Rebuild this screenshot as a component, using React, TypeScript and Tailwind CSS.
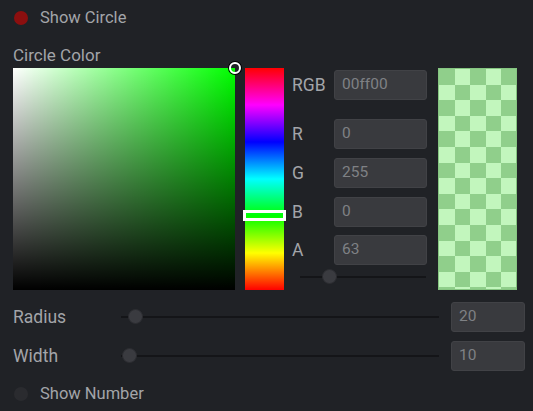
import React from "react";

const Field = ({ value, w = "w-[93px]" }: { value: string; w?: string }) => (
  <div className={`${w} h-[30px] rounded-[3px] bg-[#393a3e] border border-[#414246] flex items-center pl-[7px] text-[15.5px] text-[#7f8185]`}>
    {value}
  </div>
);

const Slider = ({ thumbX, width }: { thumbX: number; width: number }) => (
  <div className="relative h-[16px]" style={{ width }}>
    <div className="absolute left-0 right-0 top-[7px] h-[2px] bg-[#141518]" />
    <div
      className="absolute top-0 w-[15px] h-[15px] rounded-full bg-[#3a3b40] border border-[#2c2d31]"
      style={{ left: thumbX - 7 }}
    />
  </div>
);

export default function App() {
  const rows: [string, string, string][] = [
    ["RGB", "00ff00", "mb-[19px]"],
    ["R", "0", "mb-[9px]"],
    ["G", "255", "mb-[9px]"],
    ["B", "0", "mb-[8px]"],
    ["A", "63", ""],
  ];
  const cells = Array.from({ length: 15 * 5 }, (_, i) => i);
  return (
    <div
      className="w-[533px] h-[411px] bg-[#202226] text-[#a3a5a9] overflow-hidden"
      style={{ fontFamily: "Roboto, 'Liberation Sans', sans-serif" }}
    >
      <div className="h-[36px] flex items-center pl-[14px]">
        <div className="w-[14px] h-[14px] rounded-full bg-[#8c0f0f]" />
        <span className="ml-[12px] text-[16.5px]">Show Circle</span>
      </div>
      <div className="h-[32px] pl-[13px] pt-[9px] text-[17px] leading-[20px]">Circle Color</div>
      <div className="flex pl-[13px] h-[222px]">
        <div className="relative w-[222px] h-[222px] bg-[#00ff00]">
          <div className="absolute inset-0 bg-gradient-to-r from-white to-transparent" />
          <div className="absolute inset-0 bg-gradient-to-b from-transparent to-black" />
          <div className="absolute -right-[6px] -top-[6px] w-[12px] h-[12px] rounded-full border-2 border-white ring-1 ring-black" />
        </div>
        <div
          className="relative ml-[10px] w-[39px] h-[222px]"
          style={{
            background:
              "linear-gradient(to bottom, #ff0000, #ff00ff 16.66%, #0000ff 33.33%, #00ffff 50%, #00ff00 66.66%, #ffff00 83.33%, #ff0000)",
          }}
        >
          <div className="absolute -left-[2px] -right-[2px] top-[142px] h-[11px] border-[3px] border-white" />
        </div>
        <div className="ml-[8px] w-[135px] flex flex-col pt-[2px]">
          {rows.map(([l, v, mb]) => (
            <div key={l} className={`flex items-center h-[30px] ${mb}`}>
              <span className="w-[42px] text-[17.5px]">{l}</span>
              <Field value={v} />
            </div>
          ))}
          <div className="mt-[4px] pl-[8px]">
            <Slider thumbX={29} width={126} />
          </div>
        </div>
        <div className="ml-[11px] w-[79px] h-[222px] border border-[#86c681] overflow-hidden">
          <div className="grid grid-cols-5 w-[78px]">
            {cells.map((i) => {
              const r = Math.floor(i / 5);
              const c = i % 5;
              const dark = (r + c) % 2 === 0;
              return (
                <div
                  key={i}
                  className="h-[15.6px]"
                  style={{ backgroundColor: dark ? "#90cf8b" : "#c2f6bd" }}
                />
              );
            })}
          </div>
        </div>
      </div>
      <div className="flex items-center pl-[13px] mt-[12px] h-[30px]">
        <span className="w-[108px] text-[17.5px]">Radius</span>
        <Slider thumbX={14} width={318} />
        <div className="ml-[12px]">
          <Field value="20" w="w-[74px]" />
        </div>
      </div>
      <div className="flex items-center pl-[13px] mt-[9px] h-[30px]">
        <span className="w-[108px] text-[17.5px]">Width</span>
        <Slider thumbX={8} width={318} />
        <div className="ml-[12px]">
          <Field value="10" w="w-[74px]" />
        </div>
      </div>
      <div className="flex items-center pl-[14px] mt-[8px] h-[30px]">
        <div className="w-[14px] h-[14px] rounded-full bg-[#2a2b2f]" />
        <span className="ml-[12px] text-[16.5px]">Show Number</span>
      </div>
    </div>
  );
}
